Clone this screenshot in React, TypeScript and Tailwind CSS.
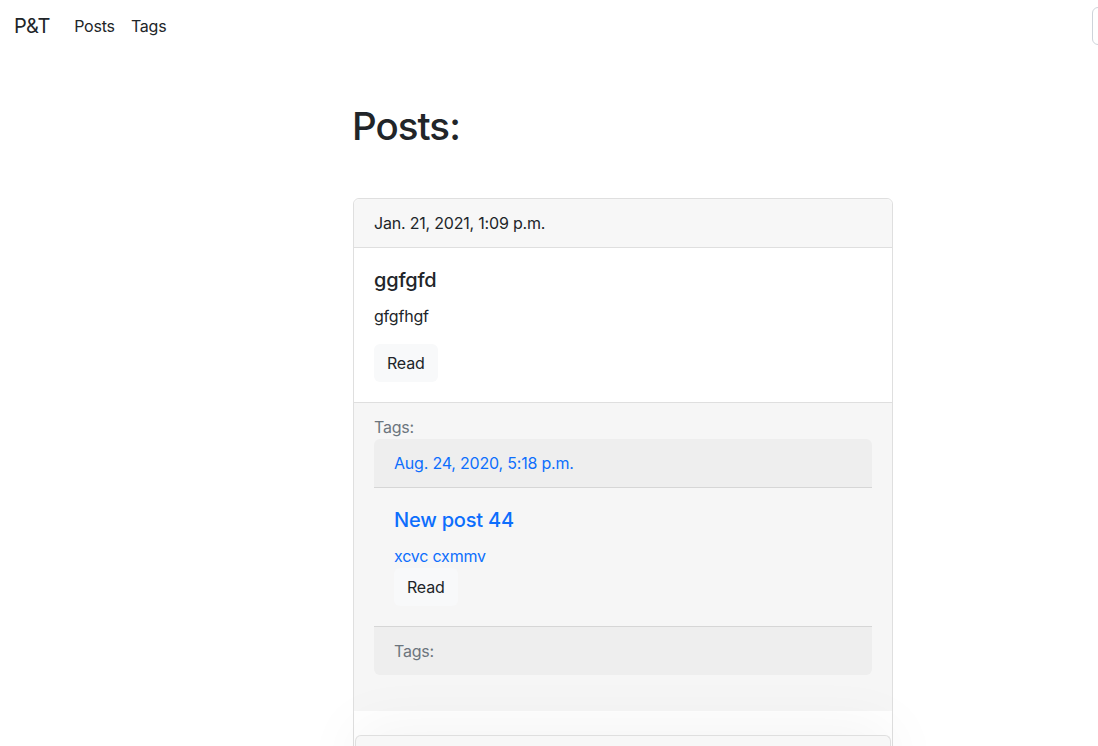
import React from 'react';

type Tag = {
  date: string;
  title: string;
  text: string;
};

type Post = {
  date: string;
  title: string;
  text: string;
  tags: Tag[];
};

const post: Post = {
  date: 'Jan. 21, 2021, 1:09 p.m.',
  title: 'ggfgfd',
  text: 'gfgfhgf',
  tags: [{ date: 'Aug. 24, 2020, 5:18 p.m.', title: 'New post 44', text: 'xcvc cxmmv' }],
};

const ReadButton = () => (
  <button className="rounded-md border border-transparent bg-[#f8f9fa] px-3 py-1.5 leading-6 text-[#212529]">
    Read
  </button>
);

const TagCard: React.FC<{ tag: Tag }> = ({ tag }) => (
  <div className="mb-6 rounded-md">
    <div className="rounded-t-md border-b border-[#d6d6d6] bg-[#eeeeee] px-5 py-3">
      <a className="text-[#0d6efd]">{tag.date}</a>
    </div>
    <div className="p-5">
      <h5 className="mb-3 text-[20px] font-medium leading-6 text-[#0d6efd]">{tag.title}</h5>
      <p className="leading-6 text-[#0d6efd]">{tag.text}</p>
      <ReadButton />
    </div>
    <div className="rounded-b-md border-t border-[#d6d6d6] bg-[#eeeeee] px-5 py-3 text-[#6c757d]">
      Tags:
    </div>
  </div>
);

const PostCard: React.FC<{ post: Post }> = ({ post }) => (
  <div>
    <div className="border-b border-[#dfdfdf] bg-[#f7f7f7] px-5 py-3">{post.date}</div>
    <div className="bg-white p-5">
      <h5 className="mb-3 text-[20px] font-medium leading-6">{post.title}</h5>
      <p className="mb-4 leading-6">{post.text}</p>
      <ReadButton />
    </div>
    <div className="border-t border-[#dfdfdf] bg-[#f6f6f6] px-5 py-3">
      <div className="leading-6 text-[#6c757d]">Tags:</div>
      {post.tags.map((t) => (
        <TagCard key={t.title} tag={t} />
      ))}
    </div>
  </div>
);

export default function App() {
  return (
    <div
      className="min-h-screen overflow-hidden bg-white text-[16px] tracking-[-0.2px] text-[#212529]"
      style={{ fontFamily: 'Inter, "Noto Sans", sans-serif' }}
    >
      <nav className="flex h-[52px] items-center overflow-hidden pl-[14px]">
        <span className="mr-4 text-[20px] leading-[30px]">P&amp;T</span>
        <a className="px-2 leading-6">Posts</a>
        <a className="px-2 leading-6">Tags</a>
        <div className="ml-auto -mr-[200px]">
          <input className="h-[38px] w-[206px] rounded-md border border-[#ced4da] px-3" />
        </div>
      </nav>

      <main className="ml-[353px] w-[540px] pt-[51px]">
        <h1 className="-ml-px mb-[49px] text-[38.5px] font-medium leading-[46px] tracking-[-0.025em]">
          Posts:
        </h1>

        <div className="rounded-md border border-[#dfdfdf]">
          <div className="overflow-hidden rounded-t-md">
            <PostCard post={post} />
          </div>
          <div className="h-6 bg-white" />
          {/* next post card, only its top edge is in view */}
          <div className="mx-px h-[60px] rounded-t-md border border-b-0 border-[#dfdfdf] bg-[#f7f7f7] shadow-[0_-8px_60px_rgba(0,0,0,0.05)]" />
        </div>
      </main>
    </div>
  );
}
